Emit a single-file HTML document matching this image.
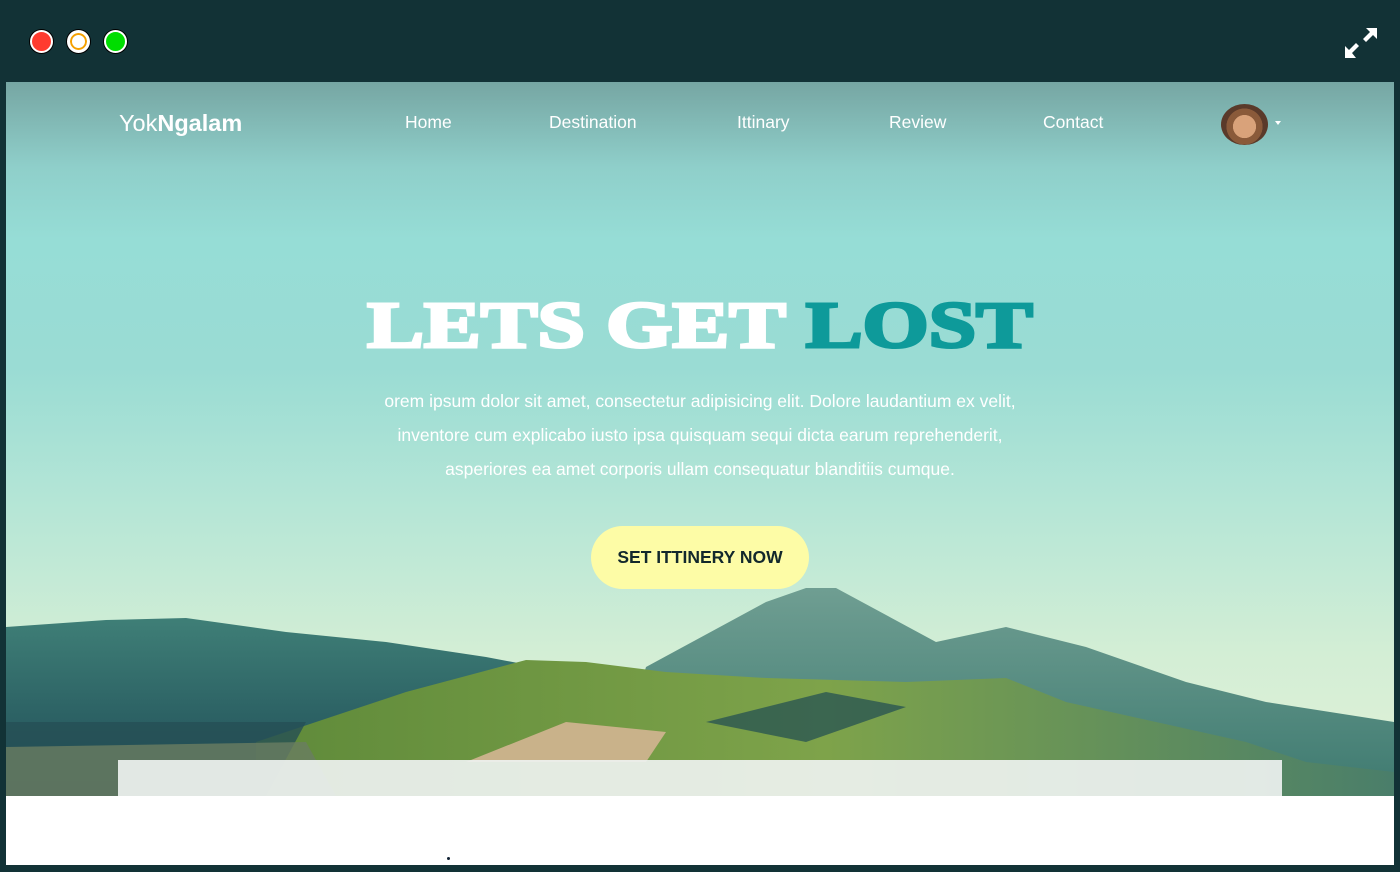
<!DOCTYPE html>
<html><head><meta charset="utf-8"><style>
*{margin:0;padding:0;box-sizing:border-box}
body{width:1400px;height:872px;background:#123236;position:relative;overflow:hidden;font-family:"Liberation Sans",sans-serif}
.dot{position:absolute;top:30px;width:23px;height:23px;border-radius:50%;border:2px solid #fff;box-shadow:0 0 0 1px #000}
.page{position:absolute;left:6px;top:82px;width:1388px;height:783px;background:#fff;overflow:hidden}
.hero{position:absolute;left:0;top:0;width:1388px;height:714px;background:linear-gradient(180deg,#76a6a3 0%,#8fcfca 12%,#96ddd6 22%,#9adcd4 40%,#b6e6d6 60%,#d3eed5 80%,#e2f1d8 100%)}
.nav a{position:absolute;top:30px;color:#fff;font-size:17.5px;text-decoration:none}
h1{position:absolute;top:206px;left:0;width:1388px;text-align:center;font-family:"Liberation Serif",serif;font-weight:900;font-size:66px;color:#fff;transform:scaleX(1.29);-webkit-text-stroke:3px #fff}
h1 span{color:#0e9a9a;-webkit-text-stroke:3px #0e9a9a}
p{position:absolute;top:302px;left:0;width:1388px;text-align:center;color:#fff;font-size:17.5px;line-height:34px}
.btn{position:absolute;left:585px;top:444px;width:218px;height:63px;border-radius:32px;background:#fdfca6;color:#12282c;font-weight:bold;font-size:17.5px;text-align:center;line-height:63px}
</style></head><body>
<div class="dot" style="left:30px;background:#ff3b2f"></div>
<div class="dot" style="left:67px;background:#fff;border:3px solid #fff;box-shadow:0 0 0 1px #000,inset 0 0 0 2px #f5a000"></div>
<div class="dot" style="left:104px;background:#00dd00"></div>
<svg style="position:absolute;left:1344px;top:27px" width="34" height="32" viewBox="0 0 34 32"><g fill="#fff"><polygon points="22,1 33,1 33,12 29,8 22,15 19,12 26,5"/><polygon points="1,31 1,19 5,23 12,16 15,19 8,26 12,31"/></g></svg>
<div class="page">
<div class="hero">
<svg width="1388" height="714" style="position:absolute;left:0;top:0">
<defs>
<linearGradient id="g1" x1="0" y1="0" x2="0" y2="1"><stop offset="0" stop-color="#3f7f77"/><stop offset="1" stop-color="#1d4a55"/></linearGradient>
<linearGradient id="g2" x1="0" y1="0" x2="0" y2="1"><stop offset="0" stop-color="#6f9e92"/><stop offset="1" stop-color="#3e7a70"/></linearGradient>
<linearGradient id="g3" x1="0" y1="0" x2="1" y2="0"><stop offset="0" stop-color="#5f8a3a"/><stop offset=".5" stop-color="#7ea34a"/><stop offset="1" stop-color="#4a7e6a"/></linearGradient>
</defs>
<polygon fill="url(#g2)" points="640,585 760,520 800,506 830,506 930,560 1000,545 1080,565 1180,600 1260,620 1388,640 1388,714 600,714"/>
<polygon fill="url(#g1)" points="0,545 100,538 180,536 280,550 380,560 480,575 560,590 640,600 700,714 0,714"/>
<polygon fill="url(#g3)" points="250,660 400,610 520,578 580,580 660,590 760,596 900,600 1000,596 1060,620 1150,640 1240,660 1300,680 1388,690 1388,714 250,714"/>
<polygon fill="#1f4c52" opacity=".7" points="700,640 820,610 900,625 800,660"/>
<polygon fill="#c9b28a" points="460,680 560,640 660,650 640,680"/>
<polygon fill="#254f55" points="0,640 300,640 260,714 0,714" opacity=".8"/>
<polygon fill="#6a7d62" points="0,665 300,660 330,714 0,714" opacity=".8"/>
</svg>
<div style="position:absolute;left:113px;top:28px;color:#fff;font-size:23.5px">Yok<b>Ngalam</b></div>
<div class="nav"><a style="left:399px">Home</a><a style="left:543px">Destination</a><a style="left:731px">Ittinary</a><a style="left:883px">Review</a><a style="left:1037px">Contact</a></div>
<div style="position:absolute;left:1215px;top:22px;width:47px;height:41px;border-radius:50%;background:radial-gradient(circle at 50% 55%,#d9a27a 0 35%,#8a5a3a 36% 55%,#5a3a2a 56%)"></div>
<div style="position:absolute;left:1269px;top:39px;border-left:3px solid transparent;border-right:3px solid transparent;border-top:4px solid #fff"></div>
<h1>LETS GET <span>LOST</span></h1>
<p>orem ipsum dolor sit amet, consectetur adipisicing elit. Dolore laudantium ex velit,<br>inventore cum explicabo iusto ipsa quisquam sequi dicta earum reprehenderit,<br>asperiores ea amet corporis ullam consequatur blanditiis cumque.</p>
<div class="btn">SET ITTINERY NOW</div>
</div>
<div style="position:absolute;left:112px;top:678px;width:1164px;height:36px;background:rgba(238,242,240,.92)"></div>
<div style="position:absolute;left:441px;top:775px;width:3px;height:3px;border-radius:50%;background:#123"></div>
</div>
</body></html>
